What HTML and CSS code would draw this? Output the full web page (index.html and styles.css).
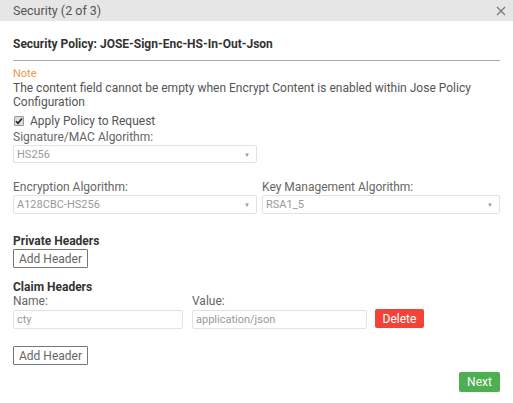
FILE: index.html
```html
<!DOCTYPE html>
<html>
<head>
<meta charset="utf-8">
<link rel="stylesheet" href="styles.css">
</head>
<body>
<div class="dialog">
  <div class="titlebar">
    <span class="title">Security (2 of 3)</span>
    <svg class="close" width="10" height="10" viewBox="0 0 10 10"><path d="M1 1L9 9M9 1L1 9" stroke="#777" stroke-width="1.2" fill="none"/></svg>
  </div>
  <div class="content">
    <div class="policy">Security Policy: JOSE-Sign-Enc-HS-In-Out-Json</div>
    <div class="note-label">Note</div>
    <div class="note-text">The content field cannot be empty when Encrypt Content is enabled within Jose Policy Configuration</div>
    <div class="check"><span class="box"><svg width="8" height="8" viewBox="0 0 8 8"><path d="M1 4.2L3 6.3L7 1.5" stroke="#222" stroke-width="1.6" fill="none"/></svg></span>Apply Policy to Request</div>
    <div class="label">Signature/MAC Algorithm:</div>
    <div class="select half"><span>HS256</span><span class="arrow">&#9660;</span></div>
    <div class="two">
      <div class="col">
        <div class="label">Encryption Algorithm:</div>
        <div class="select"><span>A128CBC-HS256</span><span class="arrow">&#9660;</span></div>
      </div>
      <div class="col">
        <div class="label">Key Management Algorithm:</div>
        <div class="select"><span>RSA1_5</span><span class="arrow">&#9660;</span></div>
      </div>
    </div>
    <div class="section">Private Headers</div>
    <button class="btn-outline">Add Header</button>
    <div class="section claim">Claim Headers</div>
    <div class="claims">
      <div class="col name">
        <div class="label">Name:</div>
        <div class="input">cty</div>
      </div>
      <div class="col value">
        <div class="label">Value:</div>
        <div class="input">application/json</div>
      </div>
      <button class="btn-delete">Delete</button>
    </div>
    <button class="btn-outline second">Add Header</button>
    <div class="footer"><button class="btn-next">Next</button></div>
  </div>
</div>
</body>
</html>
```
FILE: styles.css
```css
* { box-sizing: border-box; }
body { margin: 0; background: #fff; font-family: Roboto, "Liberation Sans", sans-serif; color: #555; }
.dialog { width: 513px; height: 403px; overflow: hidden; }
.titlebar { height: 21px; background: #e6e6e6; display: flex; align-items: center; justify-content: space-between; padding: 0 7px 0 13px; }
.title { font-size: 12.5px; color: #555; }
.close { display: block; }
.content { padding: 0 13px; }
.policy { font-size: 12px; font-weight: bold; color: #333; padding: 16px 0 9px; border-bottom: 1px solid #aaa; line-height: 14px; }
.note-label { color: #f79646; font-size: 11px; margin-top: 6px; line-height: 13px; }
.note-text { font-size: 12px; line-height: 14px; color: #555; margin-top: 1px; }
.check { display: flex; align-items: center; font-size: 12px; margin-top: 5px; line-height: 14px; color: #555; }
.box { width: 10px; height: 10px; border: 1px solid #999; background: #ddd; border-radius: 1px; margin: 0 6px 0 1px; display: flex; align-items: center; justify-content: center; }
.box svg { display: block; }
.label { font-size: 12px; color: #666; line-height: 14px; margin-top: 2px; }
.select { height: 18px; border: 1px solid #e2e2e2; border-radius: 2px; display: flex; align-items: center; justify-content: space-between; padding: 0 6px 0 3px; font-size: 11px; color: #999; margin-top: 1px; }
.two .select { height: 19px; }
.select.half { width: 244px; }
.arrow { font-size: 6px; color: #999; }
.two { display: grid; grid-template-columns: 244px 1fr; column-gap: 5px; margin-top: 15px; }
.section { font-size: 12px; font-weight: bold; color: #333; margin-top: 20px; line-height: 14px; }
.btn-outline { display: block; font-family: inherit; font-size: 12px; color: #666; background: #fff; border: 1px solid #777; border-radius: 1px; height: 19px; padding: 0; margin-top: 1px; width: 75px; white-space: nowrap; }
.claim { margin-top: 12px; }
.claims { display: flex; align-items: flex-end; }
.claims .label { margin-top: 0; }
.claims .name { width: 170px; margin-right: 9px; }
.claims .value { width: 175px; margin-right: 8px; }
.input { height: 19px; border: 1px solid #e2e2e2; border-radius: 2px; font-size: 11px; color: #999; padding: 0 3px; display: flex; align-items: center; margin-top: 2px; }
.btn-delete { font-family: inherit; font-size: 12px; color: #fff; background: #f44336; border: 0; border-radius: 2px; height: 19px; width: 49px; padding: 0; margin-bottom: 1px; }
.second { margin-top: 17px; }
.footer { display: flex; justify-content: flex-end; margin-top: 7px; }
.btn-next { font-family: inherit; font-size: 12px; color: #fff; background: #4caf50; border: 0; border-radius: 2px; height: 20px; width: 41px; padding: 0; }
```
